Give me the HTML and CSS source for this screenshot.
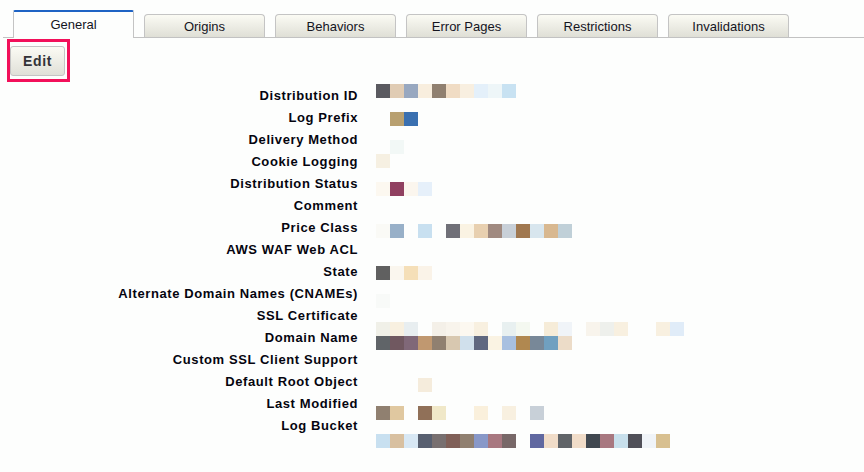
FILE: index.html
```html
<!DOCTYPE html>
<html>
<head>
<meta charset="utf-8">
<link rel="stylesheet" href="styles.css">
</head>
<body>
<div class="tabbar">
  <div class="tab active">General</div>
  <div class="tab">Origins</div>
  <div class="tab">Behaviors</div>
  <div class="tab">Error Pages</div>
  <div class="tab">Restrictions</div>
  <div class="tab">Invalidations</div>
</div>
<div class="editwrap"><button class="editbtn">Edit</button></div>
<div class="details">
  <div class="label">Distribution ID</div>
  <div class="mosaic">
    <div class="mr"><i style="background:#5a5a60"></i><i style="background:#e0ccb4"></i><i style="background:#98a8c0"></i><i style="background:#f8eede"></i><i style="background:#908070"></i><i style="background:#f0dcc4"></i><i style="background:#f8efe0"></i><i style="background:#e4f0fa"></i><i style="background:#eef6f8"></i><i style="background:#c8e2f2"></i></div>
    <div class="mr"></div>
    <div class="mr"><i></i><i style="background:#b8a070"></i><i style="background:#3a70b0"></i></div>
    <div class="mr"></div>
    <div class="mr"><i></i><i style="background:#f2f8f6"></i></div>
    <div class="mr"><i style="background:#f6f0e2"></i></div>
    <div class="mr"></div>
    <div class="mr"><i style="background:#fcf8f0"></i><i style="background:#904060"></i><i style="background:#fbf6ee"></i><i style="background:#e6f0fa"></i></div>
    <div class="mr"></div>
    <div class="mr"></div>
    <div class="mr"><i style="background:#fafaf6"></i><i style="background:#98b0c8"></i><i></i><i style="background:#c8e0f0"></i><i></i><i style="background:#707078"></i><i style="background:#faf3e3"></i><i style="background:#e8d0b0"></i><i style="background:#a08a80"></i><i style="background:#c8d0d8"></i><i style="background:#a07850"></i><i style="background:#d8e6ee"></i><i style="background:#d8b890"></i><i style="background:#c0d0d8"></i></div>
    <div class="mr"></div>
    <div class="mr"></div>
    <div class="mr"><i style="background:#606060"></i><i style="background:#faf6ee"></i><i style="background:#f5dfb8"></i><i style="background:#faf3e8"></i></div>
    <div class="mr"></div>
    <div class="mr"><i style="background:#f8faf8"></i></div>
    <div class="mr"></div>
    <div class="mr"><i style="background:#f0f0e8"></i><i style="background:#f8f0e0"></i><i style="background:#e8eef0"></i><i></i><i style="background:#f4f0e8"></i><i style="background:#f8f4ec"></i><i style="background:#fcf8f0"></i><i style="background:#f8f0e0"></i><i></i><i style="background:#e8f0f0"></i><i style="background:#f4f8f0"></i><i></i><i style="background:#f6ecd8"></i><i style="background:#f0f4f8"></i><i></i><i style="background:#f8f4ec"></i><i style="background:#eef0ec"></i><i style="background:#f8f0e0"></i><i></i><i></i><i style="background:#f8f0e0"></i><i style="background:#e0ecf8"></i></div>
    <div class="mr"><i style="background:#606468"></i><i style="background:#705860"></i><i style="background:#806878"></i><i style="background:#c09870"></i><i style="background:#908070"></i><i style="background:#d8c8b0"></i><i style="background:#d0e0ec"></i><i style="background:#606880"></i><i style="background:#faf3e3"></i><i style="background:#a8c0e0"></i><i style="background:#b08850"></i><i style="background:#788898"></i><i style="background:#70a0c0"></i><i style="background:#ecdcc8"></i></div>
    <div class="mr"></div>
    <div class="mr"></div>
    <div class="mr"><i></i><i></i><i></i><i style="background:#f5ecdc"></i></div>
    <div class="mr"></div>
    <div class="mr"><i style="background:#908070"></i><i style="background:#e0c8a0"></i><i></i><i style="background:#907058"></i><i style="background:#f0e8c8"></i><i></i><i></i><i style="background:#faf0dc"></i><i></i><i style="background:#f8f0e0"></i><i></i><i style="background:#c8d0d8"></i></div>
    <div class="mr"></div>
    <div class="mr"><i style="background:#c8e0f0"></i><i style="background:#d8c0a0"></i><i style="background:#d8e8f4"></i><i style="background:#586070"></i><i style="background:#787070"></i><i style="background:#806058"></i><i style="background:#908070"></i><i style="background:#8898c8"></i><i style="background:#a87880"></i><i style="background:#786868"></i><i></i><i style="background:#6068a0"></i><i style="background:#f0dcc8"></i><i style="background:#606468"></i><i style="background:#f0dcc8"></i><i style="background:#404850"></i><i style="background:#a87880"></i><i style="background:#c8e0ec"></i><i style="background:#505058"></i><i style="background:#f0f4f8"></i><i style="background:#d8c090"></i></div>
  </div>
  <div class="label">Log Prefix</div>
  <div class="label">Delivery Method</div>
  <div class="label">Cookie Logging</div>
  <div class="label">Distribution Status</div>
  <div class="label">Comment</div>
  <div class="label">Price Class</div>
  <div class="label">AWS WAF Web ACL</div>
  <div class="label">State</div>
  <div class="label">Alternate Domain Names (CNAMEs)</div>
  <div class="label">SSL Certificate</div>
  <div class="label">Domain Name</div>
  <div class="label">Custom SSL Client Support</div>
  <div class="label">Default Root Object</div>
  <div class="label">Last Modified</div>
  <div class="label">Log Bucket</div>
</div>
</body>
</html>
```
FILE: styles.css
```css
html, body {
  margin: 0;
  padding: 0;
  background: #fdfefd;
  font-family: "Liberation Sans", Arial, sans-serif;
}
body {
  width: 864px;
  height: 472px;
  overflow: hidden;
}
.tabbar {
  display: flex;
  align-items: flex-end;
  gap: 10px;
  margin-left: 3px;
  padding-left: 10px;
  padding-top: 10px;
  border-bottom: 1px solid #c2c2c2;
}
.tab {
  box-sizing: border-box;
  width: 121px;
  height: 23px;
  border: 1px solid #c4c4c4;
  border-bottom: none;
  border-radius: 4px 4px 0 0;
  background: linear-gradient(#fbfbf4, #dfdfd6);
  color: #14141e;
  font-size: 13px;
  text-align: center;
  line-height: 23px;
}
.tab.active {
  height: 28px;
  margin-bottom: -1px;
  border-top: 2px solid #1e63c4;
  border-radius: 2px 2px 0 0;
  background: #fdfefd;
  line-height: 25px;
}
.editwrap {
  display: inline-block;
  margin: 1px 0 0 7px;
  border: 3px solid #f2105a;
  padding: 4px 2px 3px 0;
}
.editbtn {
  display: block;
  box-sizing: border-box;
  width: 55px;
  height: 30px;
  margin: 0;
  padding: 0;
  border: 1px solid #c4c4c4;
  border-radius: 3px;
  background: linear-gradient(#fbfbf4, #e0e0d8);
  font-family: "Liberation Sans", Arial, sans-serif;
  font-weight: bold;
  font-size: 14px;
  letter-spacing: 0.6px;
  color: #333338;
}
.details {
  display: grid;
  grid-template-columns: 358px 400px;
  grid-auto-flow: column;
  grid-template-rows: repeat(16, 22px);
  column-gap: 18px;
  margin-top: 2px;
}
.label {
  grid-column: 1;
  box-sizing: border-box;
  padding-top: 1px;
  text-align: right;
  font-weight: bold;
  font-size: 13px;
  letter-spacing: 0.6px;
  line-height: 22px;
  color: #05050f;
  white-space: nowrap;
}
.mosaic {
  grid-column: 2;
  grid-row: 1 / span 16;
  display: flex;
  flex-direction: column;
}
.mr {
  display: flex;
  height: 14px;
  flex: none;
}
.mr i {
  display: block;
  width: 14px;
  height: 14px;
  flex: none;
}
```
